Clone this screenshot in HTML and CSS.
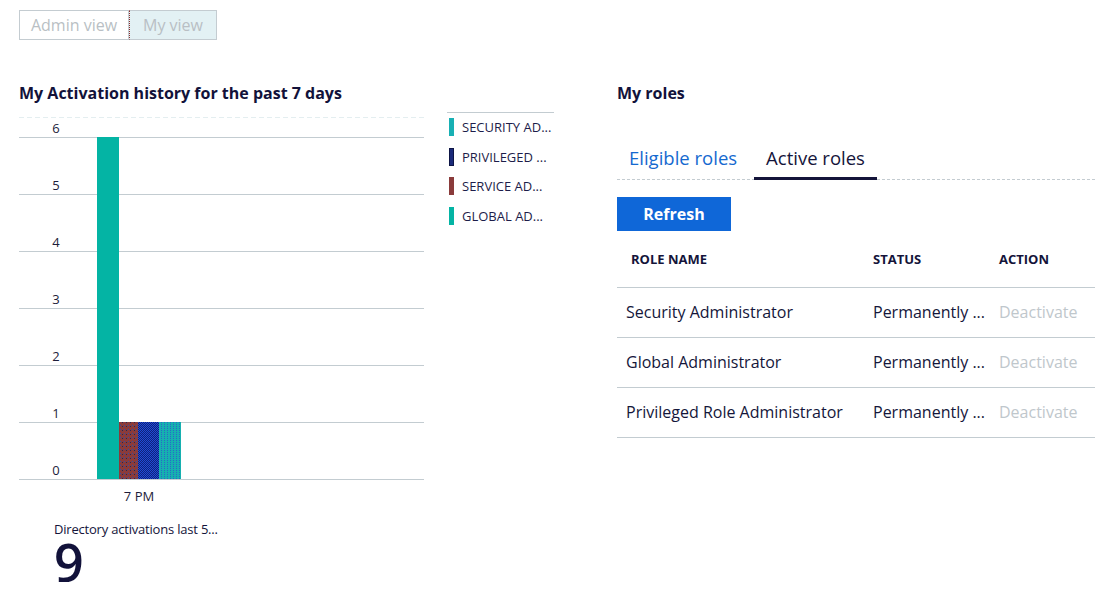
FILE: index.html
```html
<!DOCTYPE html>
<html>
<head>
<meta charset="utf-8">
<link rel="stylesheet" href="styles.css">
</head>
<body>
<div class="page">
  <div class="toggle">
    <button class="tg">Admin view</button>
    <button class="tg tg-active">My view</button>
  </div>
  <div class="cols">
    <section class="left">
      <h2 class="title">My Activation history for the past 7 days</h2>
      <div class="chart-row">
        <svg class="chart" width="405" height="395" viewBox="0 0 405 395">
          <defs>
            <pattern id="pRed" width="4" height="4" patternUnits="userSpaceOnUse">
              <rect width="4" height="4" fill="#8a3b3b"/>
              <rect x="1" y="1" width="1" height="1" fill="#2f4fa8"/>
              <rect x="3" y="2" width="1" height="1" fill="#1d2a5a"/>
            </pattern>
            <pattern id="pBlue" width="2" height="2" patternUnits="userSpaceOnUse">
              <rect width="2" height="2" fill="#1f4bd6"/>
              <rect width="1" height="1" fill="#10217a"/>
              <rect x="1" y="1" width="1" height="1" fill="#10217a"/>
            </pattern>
            <pattern id="pTeal" width="3" height="2" patternUnits="userSpaceOnUse">
              <rect width="3" height="2" fill="#16b0b0"/>
              <rect x="1" width="1" height="1" fill="#2a66c8"/>
            </pattern>
          </defs>
          <line x1="0" y1="5.5" x2="405" y2="5.5" class="dash"/>
          <g class="grid">
            <line x1="0" y1="25.5" x2="405" y2="25.5"/>
            <line x1="0" y1="82.5" x2="405" y2="82.5"/>
            <line x1="0" y1="139.5" x2="405" y2="139.5"/>
            <line x1="0" y1="196.5" x2="405" y2="196.5"/>
            <line x1="0" y1="253.5" x2="405" y2="253.5"/>
            <line x1="0" y1="310.5" x2="405" y2="310.5"/>
            <line x1="0" y1="367.5" x2="405" y2="367.5"/>
          </g>
          <g class="ylab">
            <text x="37" y="21">6</text>
            <text x="37" y="78">5</text>
            <text x="37" y="135">4</text>
            <text x="37" y="192">3</text>
            <text x="37" y="249">2</text>
            <text x="37" y="306">1</text>
            <text x="37" y="363">0</text>
          </g>
          <rect x="78" y="25" width="22" height="342" fill="#04b4a4"/>
          <rect x="100" y="310" width="19" height="57" fill="url(#pRed)"/>
          <rect x="119" y="310" width="21" height="57" fill="url(#pBlue)"/>
          <rect x="140" y="310" width="22" height="57" fill="url(#pTeal)"/>
          <text x="120" y="389" class="xlab">7 PM</text>
        </svg>
        <ul class="legend">
          <li><span class="sw sw-sec"></span>SECURITY AD...</li>
          <li><span class="sw sw-priv"></span>PRIVILEGED ...</li>
          <li><span class="sw sw-serv"></span>SERVICE AD...</li>
          <li><span class="sw sw-glob"></span>GLOBAL AD...</li>
        </ul>
      </div>
      <div class="kpi">
        <div class="kpi-label">Directory activations last 5...</div>
        <div class="kpi-value">9</div>
      </div>
    </section>
    <section class="right">
      <h2 class="title">My roles</h2>
      <div class="tabs">
        <div class="tab">Eligible roles</div>
        <div class="tab tab-active">Active roles</div>
      </div>
      <button class="refresh">Refresh</button>
      <table class="roles">
        <thead>
          <tr><th class="c1">ROLE NAME</th><th class="c2">STATUS</th><th class="c3">ACTION</th></tr>
        </thead>
        <tbody>
          <tr><td class="c1">Security Administrator</td><td class="c2">Permanently ...</td><td class="c3 muted">Deactivate</td></tr>
          <tr><td class="c1">Global Administrator</td><td class="c2">Permanently ...</td><td class="c3 muted">Deactivate</td></tr>
          <tr><td class="c1">Privileged Role Administrator</td><td class="c2">Permanently ...</td><td class="c3 muted">Deactivate</td></tr>
        </tbody>
      </table>
    </section>
  </div>
</div>
</body>
</html>
```
FILE: styles.css
```css
* { box-sizing: border-box; }
html, body { margin: 0; padding: 0; background: #fff; }
body {
  font-family: "Open Sans", "Noto Sans", sans-serif;
  color: #14163a;
}
.page { padding: 10px 0 0 19px; }

.toggle { display: flex; }
.tg {
  font-family: inherit;
  font-size: 16px;
  color: #b9bfc4;
  background: #fff;
  border: 1px solid #c4ccd1;
  height: 30px;
  margin: 0;
  padding: 0;
  cursor: pointer;
}
.tg:first-child { width: 110px; }
.tg-active {
  width: 88px;
  background: #e3f1f4;
  border-left: 1px dotted #8a2a2a;
}

.cols { display: flex; margin-top: 43px; }
.left { width: 598px; }
.right { flex: 1; }

.title {
  margin: 0;
  font-size: 16px;
  font-weight: 700;
  line-height: 20px;
  color: #12123a;
}

.chart-row { display: flex; margin-top: 9px; }
.chart { display: block; }
.chart .dash { stroke: #e4eef0; stroke-width: 1; stroke-dasharray: 5 3; }
.chart .grid line { stroke: #c3ccd1; stroke-width: 1; }
.chart .ylab text { font-family: "Open Sans", sans-serif; font-size: 13px; fill: #1d1d3a; text-anchor: middle; }
.chart .xlab { font-family: "Open Sans", sans-serif; font-size: 13px; fill: #1d1d3a; text-anchor: middle; }

.legend {
  list-style: none;
  margin: 0 0 0 23px;
  padding: 5px 0 0 2px;
  width: 107px;
  border-top: 1px solid #c3ccd1;
  display: flex;
  flex-direction: column;
  gap: 11px;
}
.legend li {
  display: flex;
  align-items: center;
  font-size: 13px;
  line-height: 18.5px;
  color: #1d1d4a;
  white-space: nowrap;
}
.sw { width: 5px; height: 18px; margin-right: 8px; flex: none; }
.sw-sec { background: #18b0b4; }
.sw-priv { background: #1a2a7a; border: 1px solid #0d1545; }
.sw-serv { background: #8a3b3b; }
.sw-glob { background: #04b4a4; }

.kpi { margin: 14px 0 0 35px; }
.kpi-label { font-size: 13px; line-height: 16px; letter-spacing: -0.2px; color: #14143a; }
.kpi-value { font-size: 52px; line-height: 40px; font-weight: 600; color: #12123a; margin-top: 5px; }

.tabs {
  display: flex;
  margin-top: 33px;
  border-bottom: 1px dashed #c4ccd1;
  height: 44px;
  align-items: flex-end;
}
.tab {
  font-size: 18.5px;
  line-height: 26px;
  padding: 0 12px 6px 12px;
  color: #1469cf;
  margin-bottom: -1px;
  border-bottom: 3px solid transparent;
}
.tab + .tab { margin-left: 5px; }
.tab-active { color: #14143a; border-bottom-color: #14143a; }

.refresh {
  display: block;
  margin-top: 17px;
  width: 114px;
  height: 34px;
  border: none;
  background: #0f67d8;
  color: #fff;
  font-family: inherit;
  font-size: 16px;
  font-weight: 700;
  padding: 0;
}

.roles { width: 100%; border-collapse: collapse; margin-top: 6px; }
.roles th {
  text-align: left;
  font-size: 13px;
  font-weight: 700;
  height: 50px;
  padding: 0 0 6px 0;
  border-bottom: 1px solid #c3ccd1;
  color: #14143a;
}
.roles td {
  font-size: 16px;
  height: 50px;
  padding: 0;
  border-bottom: 1px solid #c3ccd1;
  white-space: nowrap;
  color: #14163a;
}
.roles th.c1 { padding-left: 14px; width: 256px; }
.roles td.c1 { padding-left: 9px; }
.roles .c2 { width: 126px; }
.roles td.muted { color: #bfc7cc; }
```
